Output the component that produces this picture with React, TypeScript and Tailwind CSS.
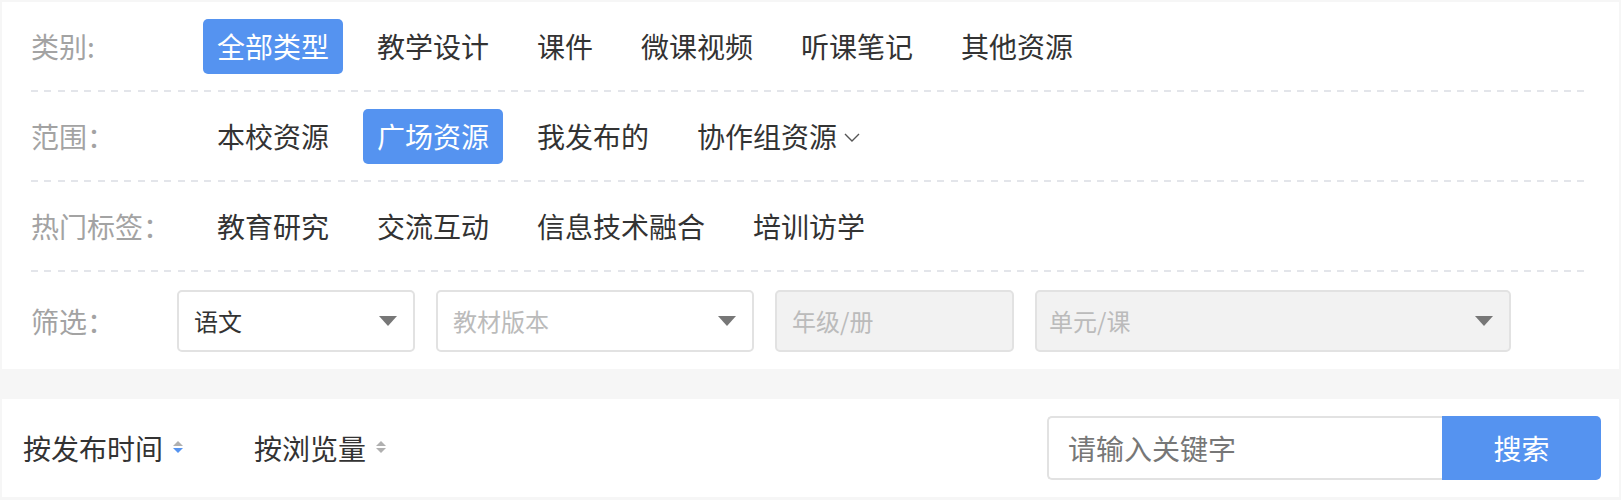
import { useState } from 'react';

const categories = ['全部类型', '教学设计', '课件', '微课视频', '听课笔记', '其他资源'];
const scopes = ['本校资源', '广场资源', '我发布的', '协作组资源'];
const tags = ['教育研究', '交流互动', '信息技术融合', '培训访学'];

function Dashed() {
  return (
    <div className="h-[2px] bg-[repeating-linear-gradient(to_right,#e3e5ea_0px,#e3e5ea_7px,transparent_7px,transparent_13.33px)]" />
  );
}

interface FilterRowProps {
  label: string;
  items: string[];
  active: number;
  onSelect: (i: number) => void;
  dropdownIndex?: number;
}

function FilterRow({ label, items, active, onSelect, dropdownIndex }: FilterRowProps) {
  return (
    <div className="flex h-[88px] items-center">
      <span className="w-[172px] shrink-0 text-[#a3a3a3]">{label}</span>
      <div className="flex items-center gap-[20px]">
        {items.map((item, i) => (
          <button
            key={item}
            onClick={() => onSelect(i)}
            className={`flex h-[55px] items-center rounded-[5px] px-[14px] ${
              i === active ? 'bg-[#5593f0] text-white' : 'text-[#333]'
            }`}
          >
            {item}
            {i === dropdownIndex && (
              <svg width="16" height="9" viewBox="0 0 16 9" className="ml-[7px] mt-[3px]">
                <polyline points="1,1 8,8 15,1" fill="none" stroke="#555" strokeWidth="1.4" />
              </svg>
            )}
          </button>
        ))}
      </div>
    </div>
  );
}

function Caret() {
  return (
    <svg width="18" height="10" viewBox="0 0 18 10">
      <polygon points="0,0 18,0 9,10" fill="#777" />
    </svg>
  );
}

function SortIcon({ down }: { down?: boolean }) {
  return (
    <svg width="10" height="12" viewBox="0 0 10 12" className="mt-[-2px]">
      <polygon points="5,0 10,5 0,5" fill="#b0b0b0" />
      <polygon points="0,7 10,7 5,12" fill={down ? '#5593f0' : '#b0b0b0'} />
    </svg>
  );
}

export default function App() {
  const [cat, setCat] = useState(0);
  const [scope, setScope] = useState(1);
  const [tag, setTag] = useState(-1);
  const [keyword, setKeyword] = useState('');

  return (
    <div className="min-h-[500px] bg-[#f6f6f6] px-[2px] pt-[2px] pb-[3px] font-['Noto_Sans_CJK_SC','Liberation_Sans',sans-serif] text-[28px]">
      <div className="bg-white pl-[29px] pr-[28px]">
        <FilterRow label="类别:" items={categories} active={cat} onSelect={setCat} />
        <Dashed />
        <FilterRow label="范围：" items={scopes} active={scope} onSelect={setScope} dropdownIndex={3} />
        <Dashed />
        <FilterRow label="热门标签：" items={tags} active={tag} onSelect={setTag} />
        <Dashed />
        <div className="flex h-[97px] items-center">
          <span className="w-[146px] shrink-0 text-[#a3a3a3]">筛选：</span>
          <div className="flex gap-[21px] text-[24px]">
            <div className="flex h-[62px] w-[238px] items-center justify-between rounded-[5px] border-2 border-[#e2e2e2] pl-[15px] pr-[16px] text-[#333]">
              语文
              <Caret />
            </div>
            <div className="flex h-[62px] w-[318px] items-center justify-between rounded-[5px] border-2 border-[#e2e2e2] pl-[15px] pr-[16px] text-[#bbb]">
              教材版本
              <Caret />
            </div>
            <div className="flex h-[62px] w-[239px] items-center rounded-[5px] border-2 border-[#e2e2e2] bg-[#f2f2f2] pl-[15px] text-[#bbb]">
              年级/册
            </div>
            <div className="flex h-[62px] w-[476px] items-center justify-between rounded-[5px] border-2 border-[#e2e2e2] bg-[#f2f2f2] pl-[12px] pr-[16px] text-[#bbb]">
              单元/课
              <Caret />
            </div>
          </div>
        </div>
      </div>

      <div className="mt-[30px] flex h-[98px] items-center bg-white pl-[21px] pr-[18px] text-[#333]">
        <button className="flex items-center gap-[10px]">
          按发布时间
          <SortIcon down />
        </button>
        <button className="ml-[71px] flex items-center gap-[10px]">
          按浏览量
          <SortIcon />
        </button>
        <div className="ml-auto flex h-[64px]">
          <input
            value={keyword}
            onChange={(e) => setKeyword(e.target.value)}
            placeholder="请输入关键字"
            className="h-full w-[395px] rounded-l-[5px] border-2 border-r-0 border-[#e2e2e2] px-[19px] text-[28px] outline-none placeholder:text-[#777]"
          />
          <button className="h-full w-[159px] rounded-r-[5px] bg-[#5593f0] text-white">搜索</button>
        </div>
      </div>
    </div>
  );
}
